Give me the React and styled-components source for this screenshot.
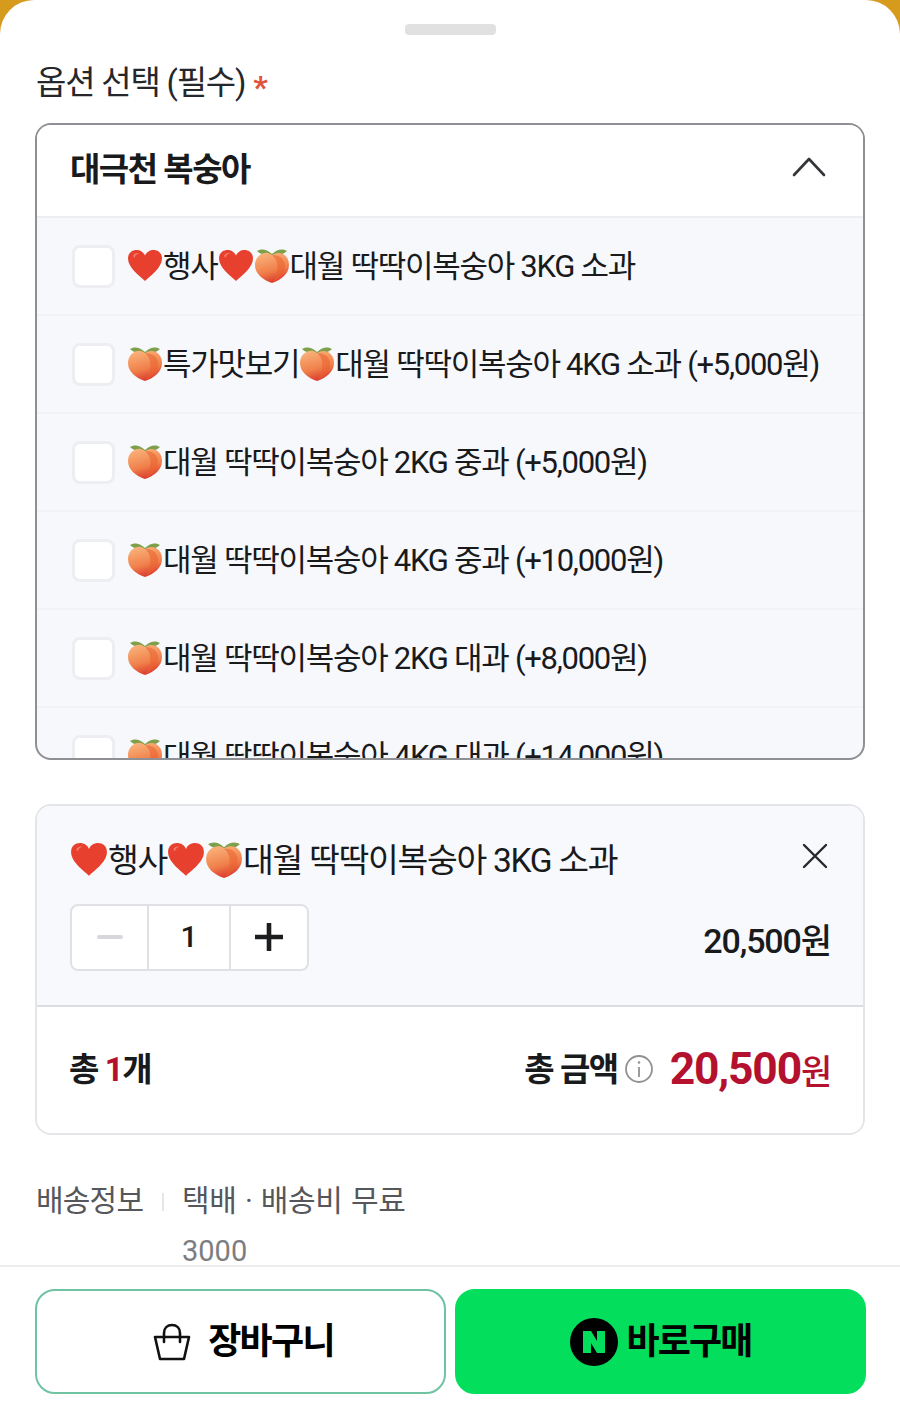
import React from 'react';
import styled, { createGlobalStyle } from 'styled-components';

const Global = createGlobalStyle`
  html, body { margin: 0; padding: 0; background: #d69a1c; }
  * { box-sizing: border-box; }
`;
const FONT = `"Roboto", "Noto Sans CJK KR", sans-serif`;

const Sheet = styled.div`
  width: 900px; height: 1416px; background: #fff; border-radius: 34px 34px 0 0;
  overflow: hidden; display: flex; flex-direction: column; font-family: ${FONT}; color: #191a1c;
`;
const Scroll = styled.div`flex: 1; min-height: 0; padding: 24px 35px 0 35px;`;
const Handle = styled.div`width: 91px; height: 11px; border-radius: 4px; background: #e1e1e1; margin: 0 auto 22px;`;
const Title = styled.div`
  display: flex; align-items: center; height: 46px; font-size: 33px; letter-spacing: -1.2px; color: #26272a; margin-bottom: 20px; padding-left: 1px;
`;
const Star = styled.span`color: #e0533d; font-size: 32px; font-weight: 700; margin-left: 8px; line-height: 1; position: relative; top: 7px;`;
const Select = styled.div`
  height: 637px; border: 2px solid #8f9093; border-radius: 16px; overflow: hidden; background: #f6f8fc; margin-bottom: 44px;
`;
const SelectHead = styled.div`
  height: 93px; background: #fff; border-bottom: 2px solid #eceef1; display: flex; align-items: center; justify-content: space-between;
  padding: 0 37px 8px 33px; font-size: 33px; font-weight: 700; letter-spacing: -1.5px;
`;
const Row = styled.div`
  height: 98px; flex: none; display: flex; align-items: center; padding-left: 35px; border-bottom: 2px solid #f1f3f7;
  font-size: 31px; letter-spacing: -1.27px;
`;
const Check = styled.div`
  width: 43px; height: 43px; border: 3px solid #eceef1; border-radius: 8px; background: #fff; margin-right: 12px; flex: none;
`;
const Label = styled.div`display: flex; align-items: center; white-space: nowrap;`;
const Emoji = styled.svg`width: ${p => p.$size}px; height: ${p => p.$size}px; flex: none;`;

const Card = styled.div`
  height: 331px; border: 2px solid #e3e5e8; border-radius: 16px; overflow: hidden; display: flex; flex-direction: column; margin-bottom: 46px;
`;
const Top = styled.div`
  height: 201px; background: #f7f9fc; border-bottom: 2px solid #dcdee2; padding: 32px 32px 0 33px; display: flex; flex-direction: column;
`;
const TopLine = styled.div`display: flex; align-items: center; justify-content: space-between; height: 44px; font-size: 33.5px; letter-spacing: -1.32px; margin-bottom: 22px;`;
const Close = styled.svg`width: 28px; height: 28px; margin-right: 2px; margin-top: -8px;`;
const BottomLine = styled.div`display: flex; justify-content: space-between;`;
const Stepper = styled.div`
  width: 239px; height: 67px; display: flex; background: #fff; border: 2px solid #dfe1e5; border-radius: 8px;
`;
const Step = styled.div`
  display: flex; align-items: center; justify-content: center; width: ${p => p.$w}px; flex: none;
  border-right: ${p => (p.$line ? '2px solid #dfe1e5' : 'none')};
  font-size: 30px; font-weight: 500; padding-bottom: 2px;
`;
const ItemPrice = styled.div`font-size: 34px; font-weight: 500; letter-spacing: -1.1px; margin-top: 10px;`;
const Total = styled.div`
  flex: 1; display: flex; align-items: center; justify-content: space-between; padding: 0 32px 6px 32px; background: #fff;
`;
const TotalCount = styled.div`font-size: 33px; font-weight: 700; letter-spacing: -1.4px;`;
const Red = styled.span`color: #b4112f;`;
const TotalRight = styled.div`display: flex; align-items: center;`;
const TotalLabel = styled.span`font-size: 33px; font-weight: 700; letter-spacing: -1.4px;`;
const Info = styled.svg`width: 30px; height: 30px; margin: 4px 16px 0 6px;`;
const TotalPrice = styled.span`font-size: 44.4px; font-weight: 700; color: #b4112f; letter-spacing: -1.2px; margin-top: 4px;`;
const Won = styled.span`font-size: 34px; font-weight: 500;`;

const Ship = styled.div`display: grid; grid-template-columns: 147px 1fr; font-size: 30px; letter-spacing: -0.8px; color: #55575b;`;
const ShipKey = styled.div`position: relative; height: 40px; line-height: 40px; padding-left: 1px;`;
const Bar = styled.span`position: absolute; left: 127px; top: 12px; width: 2px; height: 18px; background: #e6e6e6;`;
const ShipVal = styled.div`height: 40px; line-height: 40px; letter-spacing: -0.35px; word-spacing: 1.3px;`;
const ShipNum = styled.div`grid-column: 2; color: #7c7d80; font-size: 29px; letter-spacing: 0; margin-top: 15px; height: 30px; line-height: 30px;`;

const Footer = styled.div`
  height: 151px; flex: none; border-top: 2px solid #ececec; padding: 22px 34px 0 35px; display: grid;
  grid-template-columns: 1fr 1fr; gap: 9px; background: #fff;
`;
const Btn = styled.div`
  height: 105px; border-radius: 20px; display: flex; align-items: center; justify-content: center;
  font-size: 36px; font-weight: 700; letter-spacing: ${p => (p.$green ? '-1.9px' : '-1.7px')}; color: #000;
  background: ${p => (p.$green ? '#03df5d' : '#fff')};
  border: 2px solid ${p => (p.$green ? '#03df5d' : '#6fc3a2')};
  padding: 0 0 7px ${p => (p.$green ? '0' : '5px')};
`;
const BtnIcon = styled.svg`width: 40px; height: 40px; margin-right: 16px; margin-top: 8px; flex: none;`;
const NaverIcon = styled.svg`width: 48px; height: 48px; margin-right: 9px; margin-top: 7px; flex: none;`;
const Text = styled.span`margin-bottom: 6px;`;

const Heart = ({ size }) => (
  <Emoji $size={size} viewBox="0 0 36 36">
    <path d="M18 33 C13 28 1 20 1 10.500 C1 5 5 2 9.500 2 C13 2 16.500 4 18 7.500 C19.500 4 23 2 26.500 2 C31 2 35 5 35 10.500 C35 20 23 28 18 33 Z" fill="#e8402f" />
    <path d="M6 8 C7 5.500 10 4.500 12 5.500 C9.500 6 8 7.500 7.500 10 Z" fill="#f47a6a" />
  </Emoji>
);
const Peach = ({ size, id }) => (
  <Emoji $size={size} viewBox="0 0 36 36">
    <defs>
      <linearGradient id={id} x1="0.3" y1="0" x2="0.6" y2="1">
        <stop offset="0" stopColor="#f9b27a" />
        <stop offset="0.6" stopColor="#f07f4a" />
        <stop offset="1" stopColor="#d9342b" />
      </linearGradient>
    </defs>
    <path d="M18 6 C12 0 6 1 3 3 C7 7 13 8 18 7 C23 8 29 7 33 3 C30 1 24 0 18 6 Z" fill="#7fa04a" />
    <path d="M18 35 C9 32 1 26 1 17 C1 9 8 4 14 5 C16 5.500 17.500 6.500 18 7.500 C20 5 25 4 29 6 C33 8.500 35 12 35 17 C35 26 27 32 18 35 Z" fill={`url(#${id})`} />
    <path d="M18 7.500 C24 11 26 22 19 34 C25 31 31 25 31 18 C31 12 26 6 18 7.500 Z" fill="#e9602f" opacity="0.55" />
  </Emoji>
);

const options = [
  [['h'], '행사', ['h'], ['p'], '대월 딱딱이복숭아 3KG 소과'],
  [['p'], '특가맛보기', ['p'], '대월 딱딱이복숭아 4KG 소과 (+5,000원)'],
  [['p'], '대월 딱딱이복숭아 2KG 중과 (+5,000원)'],
  [['p'], '대월 딱딱이복숭아 4KG 중과 (+10,000원)'],
  [['p'], '대월 딱딱이복숭아 2KG 대과 (+8,000원)'],
  [['p'], '대월 딱딱이복숭아 4KG 대과 (+14,000원)'],
];
const renderParts = (parts, key, size) =>
  parts.map((part, i) => {
    if (typeof part === 'string') return <Text key={i}>{part}</Text>;
    return part[0] === 'h' ? <Heart key={i} size={size} /> : <Peach key={i} size={size} id={`peach-${key}-${i}`} />;
  });

export default function App() {
  return (
    <Sheet>
      <Global />
      <Scroll>
        <Handle />
        <Title>옵션 선택 (필수)<Star>*</Star></Title>
        <Select>
          <SelectHead>
            대극천 복숭아
            <svg width="34" height="22" viewBox="0 0 34 22" fill="none">
              <path d="M2 19 L17 3 L32 19" stroke="#333538" strokeWidth="2.600" strokeLinecap="round" strokeLinejoin="round" />
            </svg>
          </SelectHead>
          {options.map((o, i) => (
            <Row key={i}>
              <Check />
              <Label>{renderParts(o, `o${i}`, 36)}</Label>
            </Row>
          ))}
        </Select>
        <Card>
          <Top>
            <TopLine>
              <Label>{renderParts(options[0], 'cart', 38)}</Label>
              <Close viewBox="0 0 28 28" fill="none">
                <path d="M3 3 L25 25 M25 3 L3 25" stroke="#26272a" strokeWidth="2.400" strokeLinecap="round" />
              </Close>
            </TopLine>
            <BottomLine>
              <Stepper>
                <Step $w={77} $line>
                  <svg width="26" height="6" viewBox="0 0 26 6"><rect width="26" height="4" y="1" rx="2" fill="#d6d8dc" /></svg>
                </Step>
                <Step $w={82} $line>1</Step>
                <Step $w={76}>
                  <svg width="28" height="28" viewBox="0 0 28 28"><path d="M14 1 V27 M1 14 H27" stroke="#1c1d1f" strokeWidth="4.600" strokeLinecap="round" /></svg>
                </Step>
              </Stepper>
              <ItemPrice>20,500원</ItemPrice>
            </BottomLine>
          </Top>
          <Total>
            <TotalCount>총 <Red>1</Red>개</TotalCount>
            <TotalRight>
              <TotalLabel>총 금액</TotalLabel>
              <Info viewBox="0 0 30 30" fill="none">
                <circle cx="15" cy="15" r="13" stroke="#8f9194" strokeWidth="1.800" />
                <path d="M15 13 V23" stroke="#8f9194" strokeWidth="1.800" />
                <circle cx="15" cy="8.500" r="1.300" fill="#8f9194" />
              </Info>
              <TotalPrice>20,500<Won>원</Won></TotalPrice>
            </TotalRight>
          </Total>
        </Card>
        <Ship>
          <ShipKey>배송정보<Bar /></ShipKey>
          <ShipVal>택배 · 배송비 무료</ShipVal>
          <ShipNum>3000</ShipNum>
        </Ship>
      </Scroll>
      <Footer>
        <Btn>
          <BtnIcon viewBox="0 0 40 40" fill="none">
            <path d="M3 15 H37 L32 37 H8 Z" stroke="#111" strokeWidth="2.600" strokeLinejoin="round" />
            <path d="M12 20 V11 C12 6 15.500 3 20 3 C24.500 3 28 6 28 11 V20" stroke="#111" strokeWidth="2.600" strokeLinecap="round" />
          </BtnIcon>
          장바구니
        </Btn>
        <Btn $green>
          <NaverIcon viewBox="0 0 48 48">
            <circle cx="24" cy="24" r="24" fill="#000" />
            <path d="M13 13 H21 L27 23 V13 H35 V35 H27 L21 25 V35 H13 Z" fill="#03df5d" />
          </NaverIcon>
          바로구매
        </Btn>
      </Footer>
    </Sheet>
  );
}
